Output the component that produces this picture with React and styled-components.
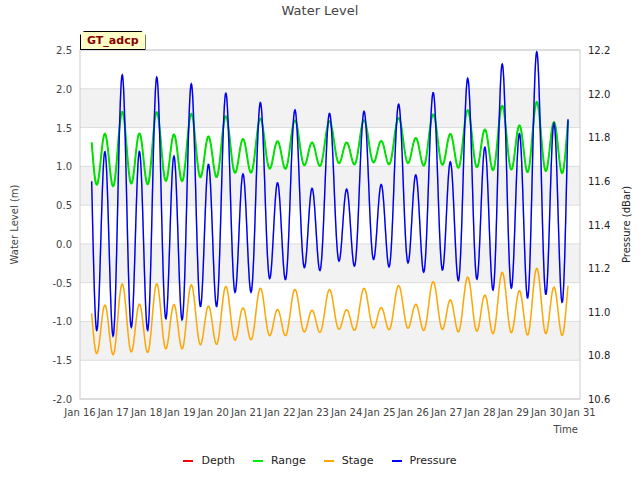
import React from "react";
import styled, { createGlobalStyle } from "styled-components";

const G = createGlobalStyle`
  body { margin:0; background:#fff; font-family:"DejaVu Sans", sans-serif; }
`;
const Page = styled.div`
  width:640px; height:480px; position:relative; display:flex; flex-direction:column; align-items:center;
`;
const Title = styled.div`
  font-size:13px; color:#444; margin-top:3px; height:17px;
`;
const Chart = styled.svg`
  display:block; width:640px; height:425px;
`;
const Legend = styled.div`
  display:flex; gap:18px; font-size:11px; color:#222; margin-top:9px;
`;
const Item = styled.div`
  display:flex; align-items:center; gap:8px;
`;
const Swatch = styled.span`
  width:10px; height:2px; background:${p => p.c};
`;
const Badge = styled.div`
  position:absolute; left:80px; top:31px; background:#ffffc8; border:1px solid #000;
  font-size:11px; font-weight:bold; color:#8b0000; padding:2px 6px 2px 6px;
  clip-path: polygon(4px 0, calc(100% - 4px) 0, 100% 4px, 100% 100%, 0 100%, 0 4px);
`;

const X0 = 80, X1 = 580, Ytop = 50, Ybot = 399;
const yL = v => Ybot - (v + 2) / 4.5 * (Ybot - Ytop) - 20;
const yR = v => Ybot - (v - 10.6) / 1.6 * (Ybot - Ytop) - 20;
const xd = d => X0 + (d - 16) / 15 * (X1 - X0);

function series() {
  const r = [], s = [], p = [];
  for (let t = 16.35; t <= 30.65; t += 0.01) {
    const ph = 2 * Math.PI * 1.93 * (t - 16.1);
    const mod = 0.75 + 0.25 * Math.sin(2 * Math.PI * (t - 16) / 14.5 + 1.2);
    const d = Math.sin(ph) * mod + 0.35 * Math.sin(ph * 0.5 + 0.7);
    const trend = (t - 16) * 0.012;
    const rng = 1.15 + trend + 0.4 * d;
    const stg = -1.05 + trend * 1.5 + 0.38 * d;
    const pr = 11.4 + trend * 0.9 + 0.5 * d;
    r.push(`${xd(t).toFixed(1)},${yL(rng).toFixed(1)}`);
    s.push(`${xd(t).toFixed(1)},${yL(stg).toFixed(1)}`);
    p.push(`${xd(t).toFixed(1)},${yR(pr).toFixed(1)}`);
  }
  return { r: r.join(" "), s: s.join(" "), p: p.join(" ") };
}

export default function App() {
  const { r, s, p } = series();
  const lt = [-2, -1.5, -1, -0.5, 0, 0.5, 1, 1.5, 2, 2.5];
  const rt = [10.6, 10.8, 11, 11.2, 11.4, 11.6, 11.8, 12, 12.2];
  const bands = [[2, 1.5], [1, 0.5], [0, -0.5], [-1, -1.5]];
  return (
    <Page>
      <G />
      <Title>Water Level</Title>
      <Badge>GT_adcp</Badge>
      <Chart viewBox="0 0 640 425">
        {bands.map(([a, b]) => (
          <rect key={a} x={X0} y={yL(a)} width={X1 - X0} height={yL(b) - yL(a)} fill="#f2f2f2" />
        ))}
        {lt.map(v => <line key={v} x1={X0} x2={X1} y1={yL(v)} y2={yL(v)} stroke="#ddd" />)}
        <rect x={X0} y={yL(2.5)} width={X1 - X0} height={yL(-2) - yL(2.5)} fill="none" stroke="#ccc" />
        {lt.map(v => <text key={v} x={72} y={yL(v) + 4} fontSize="10" fill="#444" textAnchor="end" fontFamily="DejaVu Sans">{v.toFixed(1)}</text>)}
        {rt.map(v => <text key={v} x={588} y={yR(v) + 4} fontSize="10" fill="#222" fontFamily="DejaVu Sans">{v.toFixed(1)}</text>)}
        {Array.from({ length: 16 }, (_, i) => (
          <text key={i} x={xd(16 + i)} y={yL(-2) + 17} fontSize="10" fill="#444" textAnchor="middle" fontFamily="DejaVu Sans">Jan {16 + i}</text>
        ))}
        <text x={578} y={yL(-2) + 34} fontSize="10" fill="#444" textAnchor="end" fontFamily="DejaVu Sans">Time</text>
        <text transform={`translate(18,${(yL(2.5) + yL(-2)) / 2}) rotate(-90)`} fontSize="10" fill="#444" textAnchor="middle" fontFamily="DejaVu Sans">Water Level (m)</text>
        <text transform={`translate(630,${(yL(2.5) + yL(-2)) / 2}) rotate(-90)`} fontSize="10" fill="#222" textAnchor="middle" fontFamily="DejaVu Sans">Pressure (dBar)</text>
        <polyline points={s} fill="none" stroke="#ffa500" strokeWidth="1.5" />
        <polyline points={r} fill="none" stroke="#00e000" strokeWidth="2" />
        <polyline points={p} fill="none" stroke="#0000ee" strokeWidth="1.5" />
      </Chart>
      <Legend>
        <Item><Swatch c="#ff0000" />Depth</Item>
        <Item><Swatch c="#00ee00" />Range</Item>
        <Item><Swatch c="#ffa500" />Stage</Item>
        <Item><Swatch c="#0000ff" />Pressure</Item>
      </Legend>
    </Page>
  );
}
